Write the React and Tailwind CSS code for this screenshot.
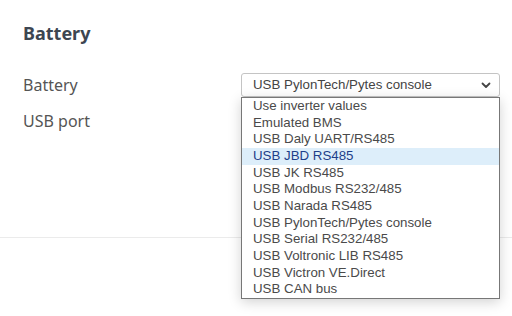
import { useState } from 'react';

const options = [
  'Use inverter values',
  'Emulated BMS',
  'USB Daly UART/RS485',
  'USB JBD RS485',
  'USB JK RS485',
  'USB Modbus RS232/485',
  'USB Narada RS485',
  'USB PylonTech/Pytes console',
  'USB Serial RS232/485',
  'USB Voltronic LIB RS485',
  'USB Victron VE.Direct',
  'USB CAN bus',
];

export default function App() {
  const [hovered, setHovered] = useState(3);

  return (
    <div className="w-[512px] h-[316px] bg-white overflow-hidden" style={{ fontFamily: '"Noto Sans", "Open Sans", sans-serif' }}>
      <div className="border-b border-[#ebebeb] pb-[104px]">
        <div className="px-[23px] pt-[22px]">
          <h2 className="text-[18px] leading-[22px] font-bold text-[#3d4651]">Battery</h2>
        </div>

        <div className="pl-[23px] pr-[12px] mt-[29px] flex flex-col gap-[12px]">
          {/* battery row */}
          <div className="flex items-center h-[24px]">
            <label className="w-[218px] shrink-0 text-[16px] text-[#555] leading-[24px]">Battery</label>
            <div className="relative w-[259px] shrink-0">
              <div
                className="h-[24px] flex items-center justify-between border border-[#c4c4c4] rounded-[3px] bg-white pl-[11px] pr-[6px] text-[13.3px] text-[#444]"
                style={{ fontFamily: '"Liberation Sans", Arial, sans-serif' }}
              >
                <span>USB PylonTech/Pytes console</span>
                <svg width="12" height="8" viewBox="0 0 12 8" className="mr-[1px]">
                  <path d="M2.5 2.5 L6 6 L9.5 2.5" fill="none" stroke="#444" strokeWidth="1.8" strokeLinecap="round" strokeLinejoin="round" />
                </svg>
              </div>

              {/* open list */}
              <ul
                className="absolute left-0 top-full w-full bg-white border border-[#777] shadow-[0_3px_12px_rgba(0,0,0,0.18)] z-10 text-[13.3px]"
                style={{ fontFamily: '"Liberation Sans", Arial, sans-serif' }}
              >
                {options.map((o, i) => (
                  <li
                    key={o}
                    onMouseEnter={() => setHovered(i)}
                    className={
                      'h-[16.67px] leading-[16.67px] pl-[11px] ' +
                      (i === hovered ? 'bg-[#ddeefa] text-[#1d3f8a]' : 'text-[#4a4a4a]')
                    }
                  >
                    {o}
                  </li>
                ))}
              </ul>
            </div>
          </div>

          {/* usb port row */}
          <div className="flex items-center h-[24px]">
            <label className="w-[218px] shrink-0 text-[16px] text-[#555] leading-[24px]">USB port</label>
          </div>
        </div>
      </div>
    </div>
  );
}
